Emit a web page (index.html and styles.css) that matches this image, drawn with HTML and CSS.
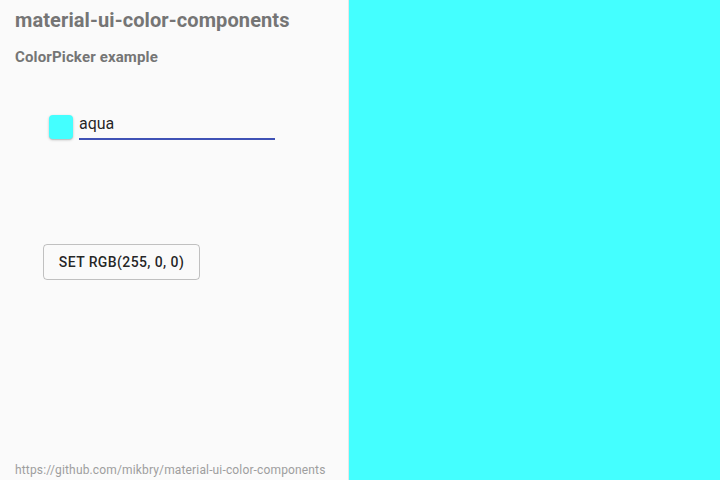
FILE: index.html
```html
<!DOCTYPE html>
<html>
<head>
<meta charset="utf-8">
<link rel="stylesheet" href="styles.css">
</head>
<body>
<div class="app">
  <div class="side">
    <h1 class="title">material-ui-color-components</h1>
    <h2 class="subtitle">ColorPicker example</h2>
    <div class="picker">
      <div class="swatch"></div>
      <div class="field"><span class="value">aqua</span></div>
    </div>
    <button class="btn">Set rgb(255, 0, 0)</button>
    <div class="spacer"></div>
    <div class="footer">https://github.com/mikbry/material-ui-color-components</div>
  </div>
  <div class="preview"></div>
</div>
</body>
</html>
```
FILE: styles.css
```css
html, body {
  margin: 0;
  padding: 0;
  height: 100%;
}
body {
  font-family: Roboto, "Liberation Sans", sans-serif;
}
.app {
  display: flex;
  height: 480px;
}
.side {
  width: 349px;
  background: #fafafa;
  border-right: 1px solid #e6e6e6;
  display: flex;
  flex-direction: column;
  padding: 0 0 0 15px;
  box-sizing: border-box;
}
.title {
  margin: 8px 0 0;
  font-size: 20px;
  font-weight: 700;
  color: #757575;
  line-height: 24px;
  letter-spacing: 0.1px;
}
.subtitle {
  margin: 16px 0 0;
  font-size: 15px;
  font-weight: 700;
  color: #757575;
  line-height: 18px;
  letter-spacing: 0.15px;
}
.picker {
  display: flex;
  align-items: flex-end;
  margin: 49px 0 0 34px;
}
.swatch {
  width: 24px;
  height: 24px;
  border-radius: 4px;
  background: #44ffff;
  box-shadow: 0 1px 3px rgba(0,0,0,0.2), 0 1px 1px rgba(0,0,0,0.12);
}
.field {
  width: 196px;
  margin-left: 6px;
  border-bottom: 2px solid #3f51b5;
  height: 24px;
  box-sizing: border-box;
  margin-bottom: -1px;
}
.value {
  font-size: 16px;
  color: rgba(0,0,0,0.87);
  line-height: 16px;
  display: block;
}
.btn {
  align-self: flex-start;
  margin: 105px 0 0 28px;
  height: 36px;
  width: 157px;
  padding: 0;
  background: transparent;
  border: 1px solid rgba(0,0,0,0.23);
  border-radius: 4px;
  font-family: Roboto, "Liberation Sans", sans-serif;
  font-size: 14px;
  font-weight: 500;
  text-transform: uppercase;
  letter-spacing: 0.4px;
  color: rgba(0,0,0,0.87);
}
.spacer {
  flex: 1;
}
.footer {
  font-size: 12px;
  color: #9e9e9e;
  line-height: 14px;
  margin-bottom: 3px;
  letter-spacing: 0.15px;
}
.preview {
  flex: 1;
  background: #44ffff;
}
```
